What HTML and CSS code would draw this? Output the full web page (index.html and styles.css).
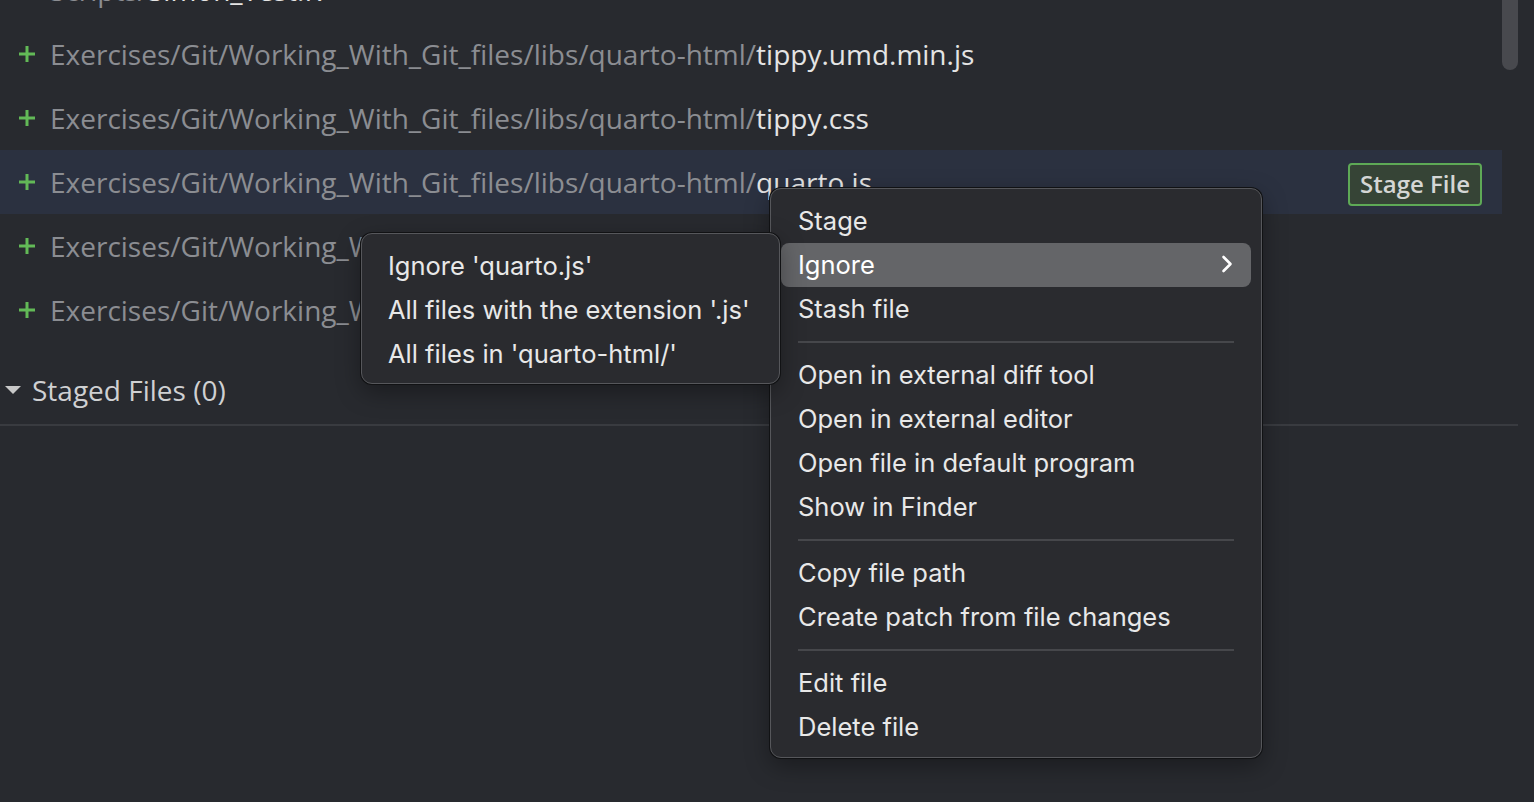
FILE: index.html
```html
<!DOCTYPE html>
<html>
<head>
<meta charset="utf-8">
<link rel="stylesheet" href="styles.css">
</head>
<body>
<div class="panel">
  <div class="list">
    <div class="row"><span class="plus"></span><span class="path">Scripts/</span><span class="name">Simon_Test.R</span></div>
    <div class="row"><span class="plus"><svg width="18" height="18" viewBox="0 0 18 18"><path d="M9 1v16M1 9h16" stroke="#62b957" stroke-width="3"/></svg></span><span class="path">Exercises/Git/Working_With_Git_files/libs/quarto-html/</span><span class="name">tippy.umd.min.js</span></div>
    <div class="row"><span class="plus"><svg width="18" height="18" viewBox="0 0 18 18"><path d="M9 1v16M1 9h16" stroke="#62b957" stroke-width="3"/></svg></span><span class="path">Exercises/Git/Working_With_Git_files/libs/quarto-html/</span><span class="name">tippy.css</span></div>
    <div class="row selected"><span class="plus"><svg width="18" height="18" viewBox="0 0 18 18"><path d="M9 1v16M1 9h16" stroke="#62b957" stroke-width="3"/></svg></span><span class="path">Exercises/Git/Working_With_Git_files/libs/quarto-html/</span><span class="name">quarto.js</span><button class="stage-btn">Stage File</button></div>
    <div class="row"><span class="plus"><svg width="18" height="18" viewBox="0 0 18 18"><path d="M9 1v16M1 9h16" stroke="#62b957" stroke-width="3"/></svg></span><span class="path">Exercises/Git/Working_With_Git_files/libs/quarto-html/</span><span class="name">popper.min.js</span></div>
    <div class="row"><span class="plus"><svg width="18" height="18" viewBox="0 0 18 18"><path d="M9 1v16M1 9h16" stroke="#62b957" stroke-width="3"/></svg></span><span class="path">Exercises/Git/Working_With_Git_files/libs/quarto-html/</span><span class="name">anchor.min.js</span></div>
  </div>
  <div class="section-header">
    <svg class="caret" width="16" height="10" viewBox="0 0 16 10"><path d="M0 1h16L8 9z" fill="#c8c8c8"/></svg>
    <span>Staged Files (0)</span>
  </div>
</div>
<div class="scroll-thumb"></div>

<div class="menu main-menu">
  <div class="item">Stage</div>
  <div class="item active">Ignore<svg class="chev" width="12" height="18" viewBox="0 0 12 18"><path d="M2.5 2l7 7-7 7" stroke="#fff" stroke-width="2.6" fill="none" stroke-linecap="round" stroke-linejoin="round"/></svg></div>
  <div class="item">Stash file</div>
  <div class="sep"></div>
  <div class="item">Open in external diff tool</div>
  <div class="item">Open in external editor</div>
  <div class="item">Open file in default program</div>
  <div class="item">Show in Finder</div>
  <div class="sep"></div>
  <div class="item">Copy file path</div>
  <div class="item">Create patch from file changes</div>
  <div class="sep"></div>
  <div class="item">Edit file</div>
  <div class="item">Delete file</div>
</div>

<div class="menu sub-menu">
  <div class="item">Ignore 'quarto.js'</div>
  <div class="item">All files with the extension '.js'</div>
  <div class="item">All files in 'quarto-html/'</div>
</div>
</body>
</html>
```
FILE: styles.css
```css
html, body {
  margin: 0;
  padding: 0;
  background: #282a2f;
  overflow: hidden;
  height: 100%;
}
body {
  position: relative;
  font-family: "Open Sans", "Noto Sans", sans-serif;
}
.panel {
  width: 1518px;
}
.list {
  margin-top: -42px;
  width: 1502px;
}
.row {
  height: 64px;
  display: flex;
  align-items: center;
  padding-left: 18px;
  font-size: 28px;
  white-space: nowrap;
  box-sizing: border-box;
}
.row.selected {
  background: #2b3140;
}
.plus {
  width: 18px;
  height: 18px;
  margin-right: 14px;
  display: flex;
}
.path {
  color: #8b8d92;
}
.name {
  color: #e4e4e4;
}
.stage-btn {
  margin-left: auto;
  margin-right: 20px;
  margin-top: 4px;
  height: 43px;
  padding: 0 10px;
  border: 2px solid #5ea956;
  border-radius: 4px;
  background: #364436;
  color: #d4d6d4;
  font-family: "Open Sans", sans-serif;
  font-weight: 600;
  font-size: 24px;
  line-height: 1;
}
.section-header {
  display: flex;
  align-items: center;
  padding-left: 5px;
  color: #cfd0d2;
  font-size: 28px;
  border-bottom: 2px solid #393b40;
  box-sizing: border-box;
  height: 84px;
  padding-top: 14px;
}
.caret {
  margin-right: 11px;
}
.scroll-thumb {
  position: absolute;
  left: 1502px;
  top: -10px;
  width: 16px;
  height: 80px;
  border-radius: 8px;
  background: #48494e;
}
.menu {
  position: absolute;
  background: #2a2b2f;
  border: 1px solid #56575b;
  box-shadow: 0 0 0 1px #111214, 0 8px 24px rgba(0,0,0,0.35);
  border-radius: 11px;
  font-family: Inter, "Liberation Sans", sans-serif;
  font-size: 25.5px;
  color: #e8e8e8;
  box-sizing: border-box;
}
.main-menu {
  left: 770px;
  top: 188px;
  width: 492px;
  height: 570px;
  padding: 10px 10px 8px 10px;
}
.sub-menu {
  left: 361px;
  top: 233px;
  width: 419px;
  height: 151px;
  padding: 10px 10px 8px 10px;
}
.item {
  height: 44px;
  display: flex;
  align-items: center;
  padding-left: 17px;
  padding-right: 20px;
  padding-bottom: 2px;
  box-sizing: border-box;
  border-radius: 8px;
  white-space: nowrap;
}
.item.active {
  background: #646568;
  color: #fff;
}
.sub-menu .item {
  padding-left: 16px;
}
.chev {
  margin-left: auto;
  margin-right: -2px;
}
.sep {
  height: 2px;
  background: #46474b;
  margin: 10px 17px;
}
```
